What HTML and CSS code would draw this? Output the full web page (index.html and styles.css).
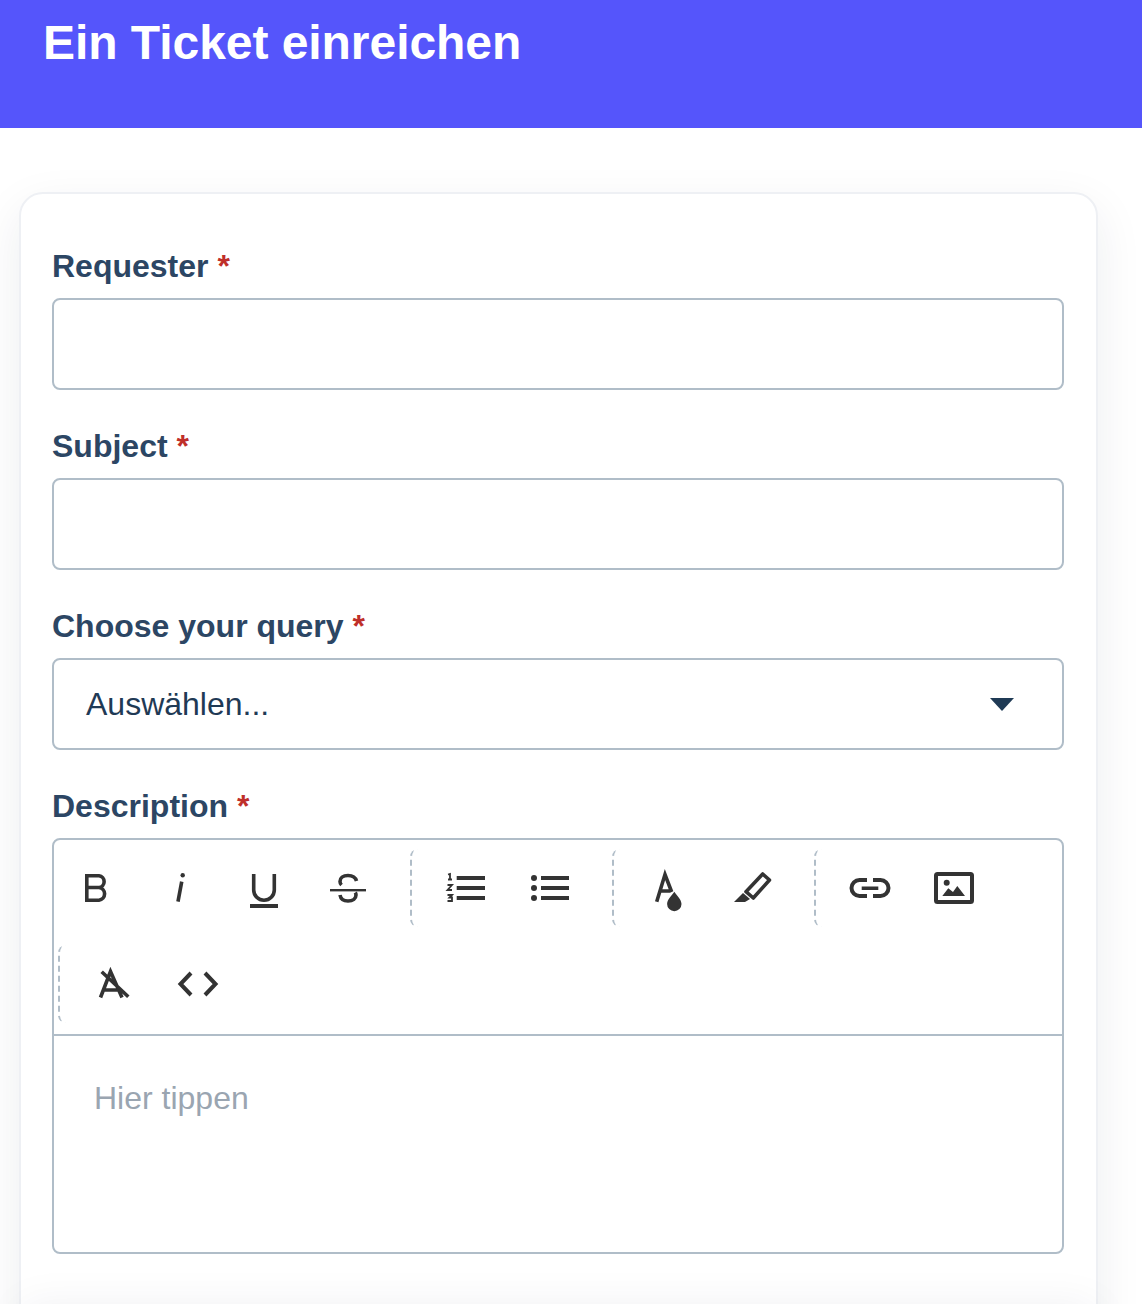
FILE: index.html
```html
<!DOCTYPE html>
<html lang="de">
<head>
<meta charset="utf-8">
<title>Ein Ticket einreichen</title>
<link rel="stylesheet" href="styles.css">
</head>
<body>
<header class="banner"><h1 class="banner-title">Ein Ticket einreichen</h1></header>
<main class="page">
  <form class="card">
    <div class="field">
      <label class="label">Requester <span class="req">*</span></label>
      <div class="input"></div>
    </div>
    <div class="field">
      <label class="label">Subject <span class="req">*</span></label>
      <div class="input"></div>
    </div>
    <div class="field">
      <label class="label">Choose your query <span class="req">*</span></label>
      <div class="input select"><span>Auswählen...</span><span class="caret"></span></div>
    </div>
    <div class="field">
      <label class="label">Description <span class="req">*</span></label>
      <div class="editor">
        <div class="toolbar">
          <div class="tool-row">
            <div class="group first">
              <button type="button" class="tool"><svg class="icon" viewBox="0 0 44 44"><path class="s3" d="M12.800 21.500V9.800H25a5.900 5.900 0 0 1 0 11.700H12.800V34.200H25a6.400 6.400 0 0 0 0-12.700"/></svg></button>
              <button type="button" class="tool"><svg class="icon" viewBox="0 0 44 44"><path class="s3" d="M23.700 15.700 20 35.700"/><circle class="f" cx="24.700" cy="9.200" r="2.200"/></svg></button>
              <button type="button" class="tool"><svg class="icon" viewBox="0 0 44 44"><path class="s3" d="M11.700 8V24a10.300 10.300 0 0 0 20.600 0V8"/><rect class="f" x="8" y="38" width="28" height="4"/></svg></button>
              <button type="button" class="tool"><svg class="icon" viewBox="0 0 44 44"><path class="s3" d="M30.500 15c-1-3.500-4-5.500-8.500-5.500-5 0-8 2.500-8 6 0 1.500.5 2.500 1.500 3.500M14 29c.7 4 4 6 8 6 5 0 8-2.500 8-6 0-1-.3-1.800-.7-2.500"/><rect class="f" x="4" y="23" width="36" height="2.400"/></svg></button>
            </div>
            <div class="group">
              <button type="button" class="tool"><svg class="icon" viewBox="0 0 44 44"><path class="f" d="M12.700 10H41v4H12.700zM12.700 20H41v4H12.700zM12.700 30H41v4H12.700z"/><path class="s1" d="M4 8.500 6 8V13.500M4 13.500H8M3.500 19H8L3.500 24H8M3.500 29H8L5.500 31.500H8V35H3.500"/></svg></button>
              <button type="button" class="tool"><svg class="icon" viewBox="0 0 44 44"><path class="f" d="M13 10h28v4H13zM13 20h28v4H13zM13 30h28v4H13z"/><circle class="f" cx="6" cy="12" r="3"/><circle class="f" cx="6" cy="22" r="3"/><circle class="f" cx="6" cy="32" r="3"/></svg></button>
            </div>
            <div class="group">
              <button type="button" class="tool"><svg class="icon" viewBox="0 0 44 44"><path class="s3" d="M10.700 35.700 19 8.500 25.700 26M13.500 25H24"/><path class="f" d="M28.300 25.700C31 30 35.500 33.500 35.500 38a7.200 7.200 0 0 1-14.400 0C21.100 33.500 25.600 30 28.300 25.700z"/></svg></button>
              <button type="button" class="tool"><svg class="icon" viewBox="0 0 44 44"><path class="s3j" d="M32.700 8 39.500 14 23.300 32 16 25.700z"/><path class="f" d="M13 27 20 33 15 36H4z"/></svg></button>
            </div>
            <div class="group">
              <button type="button" class="tool"><svg class="icon" viewBox="0 0 44 44"><path class="s4" d="M19 14H11.500a8 8 0 0 0 0 16H19M25 14H32.500a8 8 0 0 1 0 16H25"/><rect class="f" x="13.700" y="20.500" width="16.600" height="3.500"/></svg></button>
              <button type="button" class="tool"><svg class="icon" viewBox="0 0 44 44"><rect class="s4" x="4" y="8" width="36" height="28" rx="1.500"/><circle class="f" cx="14.700" cy="16.700" r="3"/><path class="f" d="M10.300 30 16.300 22.300 21 26 25.300 20 33 30z"/></svg></button>
            </div>
          </div>
          <div class="tool-row wrapped">
            <div class="group">
              <button type="button" class="tool"><svg class="icon" viewBox="0 0 44 44"><path class="s3" d="M8.500 35.500 18.500 9.500 30 35.500M12 28H27M9.700 9.700 36.300 34.700"/></svg></button>
              <button type="button" class="tool"><svg class="icon" viewBox="0 0 44 44"><path class="s4" d="M15 11 4.500 22 15 33M29 11 39.500 22 29 33"/></svg></button>
            </div>
          </div>
        </div>
        <div class="editor-body">Hier tippen</div>
      </div>
    </div>
    <div class="card-footer"></div>
  </form>
</main>
</body>
</html>
```
FILE: styles.css
```css
* { box-sizing: border-box; }
html, body { margin: 0; height: 1304px; overflow: hidden; background: #fff; }
body { font-family: "Liberation Sans", Arial, sans-serif; }
.banner { height: 128px; background: #5555fb; padding: 13px 0 0 43px; }
.banner-title { margin: 0; color: #fff; font-size: 48px; line-height: 60px; font-weight: 700; letter-spacing: -.05px; }
.page { padding: 64px 44px 0 19px; }
.card {
  border: 2px solid #eef0f4;
  border-radius: 24px;
  padding: 52px 32px 0 31px;
  background: #fff;
  box-shadow: 0 16px 48px rgba(30, 40, 60, .08);
}
.field { margin-bottom: 36px; }
.label { display: block; height: 52px; padding-top: 2px; color: #2c4664; font-size: 32px; line-height: 36px; font-weight: 700; }
.req { color: #bf2f2a; }
.input { height: 92px; border: 2px solid #b0bdc8; border-radius: 8px; background: #fff; }
.select { display: flex; align-items: center; justify-content: space-between; padding: 0 48px 0 32px; color: #1f3a55; font-size: 32px; }
.caret { width: 0; height: 0; border-left: 12px solid transparent; border-right: 12px solid transparent; border-top: 13px solid #1f3a55; }
.editor { height: 416px; border: 2px solid #b0bdc8; border-radius: 8px; background: #fff; }
.toolbar { height: 196px; border-bottom: 2px solid #b0bdc8; }
.tool-row { display: flex; height: 96px; }
.wrapped { padding-left: 4px; }
.group { display: flex; margin: 9px 0 9px 20px; padding-left: 12px; border-left: 2px dashed #b0bdc8; border-radius: 8px 0 0 8px; }
.group.first { margin-left: 0; padding-left: 0; border-left: 0; }
.wrapped .group { margin-left: 0; }
.tool { width: 84px; margin: 0; padding: 0; border: 0; background: none; display: flex; align-items: center; justify-content: center; }
.icon { width: 44px; height: 44px; overflow: visible; display: block; }
.f { fill: #333; }
.s1, .s3, .s3j, .s4 { fill: none; stroke: #333; }
.s1 { stroke-width: 1.8; }
.s3 { stroke-width: 3.6; }
.s3j { stroke-width: 3.6; stroke-linejoin: round; }
.s4 { stroke-width: 4; }
.editor-body { padding: 43px 40px; color: #9aa5b1; font-size: 32px; line-height: 38px; }
.card-footer { height: 200px; margin: 50px -32px 0 -31px; background: #fff; box-shadow: 0 0 40px rgba(30, 40, 60, .06); }
```
